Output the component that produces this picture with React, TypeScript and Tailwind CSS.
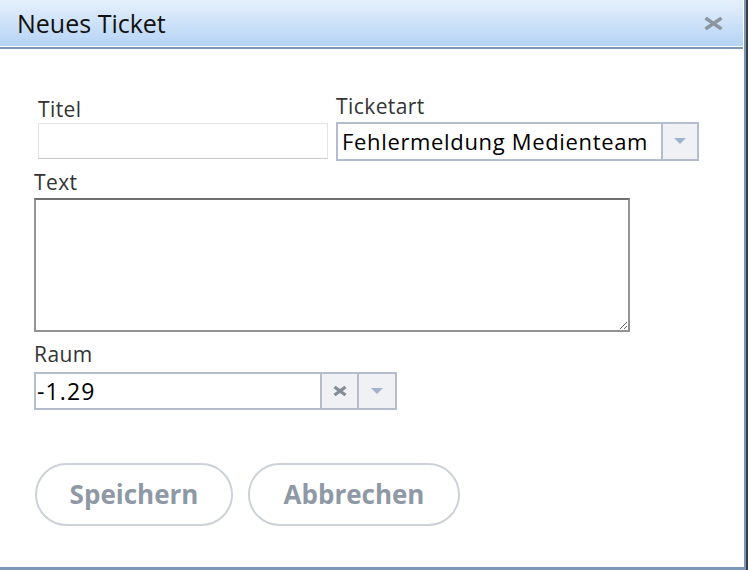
import { useState } from "react";

function Arrow() {
    return (
        <svg width="12" height="7" viewBox="0 0 12 7">
            <polygon points="0,0 12,0 6,6" fill="#a3b2cc" />
        </svg>
    );
}

function Cross({ w = 14, h = 11, color = "#8a939c", sw = 3 }: { w?: number; h?: number; color?: string; sw?: number }) {
    return (
        <svg width={w} height={h} viewBox={`0 0 ${w} ${h}`}>
            <path d={`M1.5 1 L${w - 1.5} ${h - 1} M${w - 1.5} 1 L1.5 ${h - 1}`} stroke={color} strokeWidth={sw} />
        </svg>
    );
}

export default function App() {
    const [titel, setTitel] = useState("");
    const [text, setText] = useState("");

    return (
        <div className="w-[748px] h-[570px] bg-[#3e3e3e] flex" style={{ fontFamily: "'Open Sans', Lato, sans-serif" }}>
            <div className="w-[746px] h-full bg-white border-r-2 border-b-[3px] border-[#7b98b6] pr-px flex flex-col">
                <div className="h-[46px] bg-gradient-to-b from-[#e6f0fc] to-[#b5d3f5] flex items-center justify-between pl-[17px] pr-[20px]">
                    <span className="text-[25px] leading-[30px] text-[#111]">Neues Ticket</span>
                    <Cross w={19} h={13} sw={3.5} color="#8d969f" />
                </div>
                <div className="h-px bg-white" />
                <div className="h-[2px] bg-[#7b98b6]" />

                <div className="flex flex-col px-[34px] text-[#333]">
                    <div className="flex items-start gap-2 mt-[45px]">
                        <div className="ml-1 w-[290px] pt-[3px] flex flex-col">
                            <label className="text-[21px] leading-[25px] tracking-[0.02em]">Titel</label>
                            <input
                                value={titel}
                                onChange={(e) => setTitel(e.target.value)}
                                className="mt-px h-[36px] border border-[#e3e3e3] border-b-[#c9c9c9] outline-none px-1 text-[22px]"
                            />
                        </div>
                        <div className="w-[363px] flex flex-col">
                            <label className="text-[21px] leading-[25px] tracking-[0.02em]">Ticketart</label>
                            <div className="mt-[3px] h-[39px] border-2 border-[#b5bdcc] flex">
                                <div className="flex-1 flex items-center pl-1 text-[22px] tracking-[0.03em] text-black whitespace-nowrap overflow-hidden">Fehlermeldung Medienteam</div>
                                <div className="w-[36px] bg-[#eff1f5] border-l-2 border-[#b5bdcc] flex items-center justify-center">
                                    <Arrow />
                                </div>
                            </div>
                        </div>
                    </div>

                    <label className="mt-[9px] text-[21px] leading-[25px] tracking-[0.02em]">Text</label>
                    <textarea
                        value={text}
                        onChange={(e) => setText(e.target.value)}
                        className="mt-[3px] w-[596px] h-[134px] border-2 border-[#929292] border-t-[#6f6f6f] outline-none p-1"
                    />

                    <label className="mt-[10px] text-[21px] leading-[25px] tracking-[0.02em]">Raum</label>
                    <div className="mt-[5px] w-[363px] h-[38px] border-2 border-[#b5bdcc] flex">
                        <div className="flex-1 flex items-center pl-px text-[23px] tracking-[0.05em] text-black">-1.29</div>
                        <div className="w-[37px] bg-[#eff1f5] border-l-2 border-[#b5bdcc] flex items-center justify-center">
                            <Cross w={14} h={10} sw={3.2} color="#848d97" />
                        </div>
                        <div className="w-[38px] bg-[#eff1f5] border-l-2 border-[#b5bdcc] flex items-center justify-center">
                            <Arrow />
                        </div>
                    </div>

                    <div className="flex gap-[15px] mt-[53px] ml-px">
                        <button className="w-[198px] h-[63px] rounded-full border-2 border-[#cdd2d8] text-[26px] font-bold text-[#8e99a5]">Speichern</button>
                        <button className="w-[212px] h-[63px] rounded-full border-2 border-[#cdd2d8] text-[26px] font-bold text-[#8e99a5]">Abbrechen</button>
                    </div>
                </div>
            </div>
        </div>
    );
}
